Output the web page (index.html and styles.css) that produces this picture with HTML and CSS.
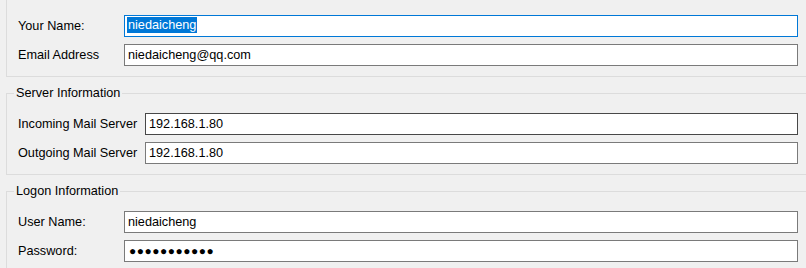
FILE: index.html
```html
<!DOCTYPE html>
<html>
<head>
<meta charset="utf-8">
<link rel="stylesheet" href="styles.css">
</head>
<body>
<div class="form">
  <fieldset class="group group-first">
    <div class="rows rows-short">
      <label class="label">Your Name:</label>
      <div class="field focused"><span class="sel">niedaicheng</span></div>
      <label class="label">Email Address</label>
      <div class="field">niedaicheng@qq.com</div>
    </div>
  </fieldset>
  <fieldset class="group">
    <legend class="legend">Server Information</legend>
    <div class="rows rows-long">
      <label class="label">Incoming Mail Server</label>
      <div class="field hover">192.168.1.80</div>
      <label class="label">Outgoing Mail Server</label>
      <div class="field">192.168.1.80</div>
    </div>
  </fieldset>
  <fieldset class="group">
    <legend class="legend">Logon Information</legend>
    <div class="rows rows-short">
      <label class="label">User Name:</label>
      <div class="field">niedaicheng</div>
      <label class="label">Password:</label>
      <div class="field password">●●●●●●●●●●●</div>
    </div>
  </fieldset>
</div>
</body>
</html>
```
FILE: styles.css
```css
html, body {
  margin: 0;
  padding: 0;
  background: #f0f0f0;
  overflow: hidden;
}
body {
  width: 806px;
  height: 268px;
  font-family: "Liberation Sans", Arial, sans-serif;
  font-size: 12.7px;
  color: #000;
}
.form {
  padding-left: 6px;
  margin-right: -30px;
}
.group {
  margin: 9px 0 0 0;
  border: 1px solid #dcdcdc;
  padding: 0 0 10px 7px;
  min-width: 0;
}
.group-first {
  margin-top: -6px;
  padding-top: 20px;
}
.legend {
  padding: 0 2px;
  line-height: 15px;
  margin-bottom: 12px;
}
.rows {
  display: grid;
  row-gap: 7px;
  padding-left: 4px;
  align-items: center;
}
.rows-short {
  grid-template-columns: 106px 674px;
}
.rows-long {
  grid-template-columns: 127px 653px;
}
.label {
  line-height: 22px;
  white-space: nowrap;
}
.field {
  box-sizing: border-box;
  height: 22px;
  border: 1px solid #7a7a7a;
  background: #fff;
  padding: 0 3px;
  line-height: 20px;
  white-space: nowrap;
}
.focused {
  border-color: #0078d7;
}
.hover {
  border-color: #484848;
}
.sel {
  display: inline-block;
  background: #0078d7;
  color: #fff;
  line-height: 16px;
  margin-left: -1px;
  padding: 0 1px 0 1px;
  vertical-align: top;
  margin-top: 1px;
}
.password {
  font-size: 12px;
  letter-spacing: 0.5px;
  padding-left: 4px;
}
```
